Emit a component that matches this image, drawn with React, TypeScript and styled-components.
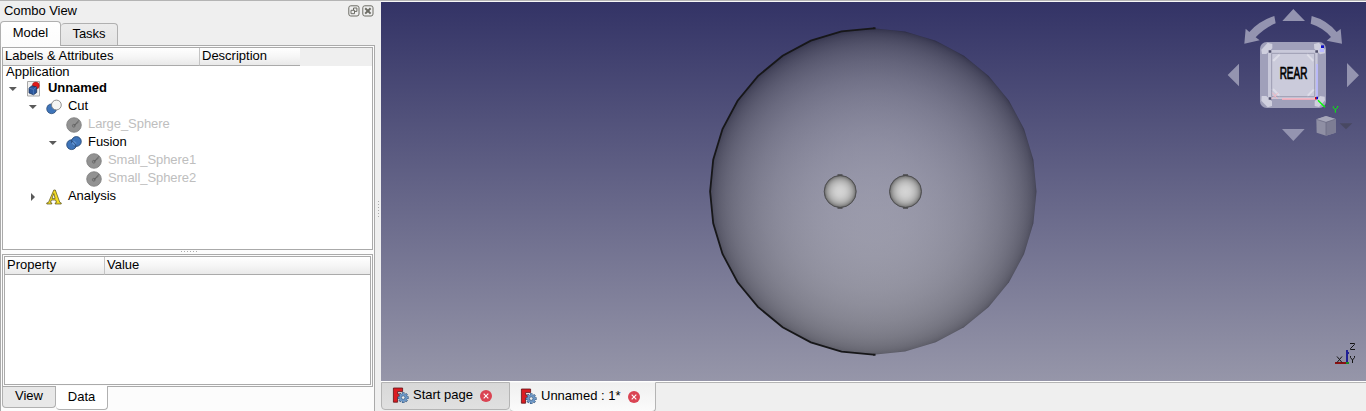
import React from "react";
import styled, { createGlobalStyle } from "styled-components";

const GlobalStyle = createGlobalStyle`
  * { box-sizing: border-box; }
  body {
    margin: 0;
    background: #efefef;
    color: #000;
    font-family: "Liberation Sans", Arial, sans-serif;
    font-size: 13px;
    line-height: 16px;
    overflow: hidden;
  }
  svg { display: block; flex: none; }
`;

const Window = styled.div`
  display: grid;
  grid-template-columns: 375px 6px 985px;
  width: 1366px;
  height: 411px;
  border-top: 1px solid #b4b4b4;
`;

const Dock = styled.aside`
  display: flex;
  flex-direction: column;
  min-width: 0;
`;

const DockTitle = styled.header`
  display: flex;
  align-items: center;
  height: 20px;
  padding: 0 1px 0 4px;
  gap: 2px;
`;

const Title = styled.span`
  flex: 1;
  letter-spacing: -0.05px;
`;

const TabRow = styled.div`
  display: flex;
  align-items: flex-end;
  height: 24px;
`;

const TopTab = styled.button<{ $active?: boolean; $width: number }>`
  width: ${(p) => p.$width}px;
  height: ${(p) => (p.$active ? 25 : 22)}px;
  margin: 0 0 ${(p) => (p.$active ? -1 : 0)}px;
  padding: ${(p) => (p.$active ? "0 0 3px" : "0 0 1px")};
  border: 1px solid #b0b0b0;
  border-left-width: ${(p) => (p.$active ? 1 : 0)}px;
  border-bottom: 0;
  border-radius: 4px 4px 0 0;
  background: ${(p) => (p.$active ? "linear-gradient(#fff, #fcfcfc)" : "linear-gradient(#ececec, #e4e4e4)")};
  font: inherit;
  position: relative;
`;

const Pane = styled.div`
  display: flex;
  flex-direction: column;
  flex: 1;
  min-height: 0;
  padding: 1px;
  border: 1px solid #aaa;
  border-bottom: 0;
  background: #fcfcfc;
`;

const TreeBox = styled.section`
  height: 203px;
  border: 1px solid #aaa;
  background: #fff;
`;

const HeaderRow = styled.div<{ $height: number }>`
  display: flex;
  height: ${(p) => p.$height}px;
  background: #efefef;
`;

const HeaderCell = styled.div<{ $width?: number; $last?: boolean }>`
  ${(p) => (p.$width ? `width: ${p.$width}px;` : "flex: 1;")}
  padding-left: 2px;
  border-right: ${(p) => (p.$last ? "0" : "1px solid #c4c4c4")};
  border-bottom: 1px solid #aaa;
  background: linear-gradient(#fff, #f6f6f6 50%, #e9e9e9);
  line-height: 15px;
`;

const RootLabel = styled.div`
  height: 14px;
  padding-left: 3px;
  line-height: 12px;
`;

const Row = styled.div<{ $depth: number; $muted?: boolean; $bold?: boolean }>`
  display: flex;
  align-items: center;
  height: 18px;
  padding-left: ${(p) => p.$depth * 20 + 5}px;
  color: ${(p) => (p.$muted ? "#bebebe" : "#000")};
  font-weight: ${(p) => (p.$bold ? 700 : 400)};
`;

const Twisty = styled.span`
  width: 10px;
  margin-right: 8px;
`;

const RowIcon = styled.span`
  width: 16px;
  margin-right: 6px;
`;

const RowText = styled.span`
  letter-spacing: -0.06px;
  line-height: 16px;
  margin-top: -2px;
`;

const SplitterDots = styled.div<{ $vertical?: boolean }>`
  display: flex;
  flex-direction: ${(p) => (p.$vertical ? "column" : "row")};
  align-items: center;
  justify-content: center;
  gap: 2px;
  ${(p) => (p.$vertical ? "padding-top: 4px;" : "height: 4px; padding: 0 0 1px 2px;")}
`;

const Dot = styled.i`
  width: 1px;
  height: 1px;
  background: #aaa;
`;

const PropertyFrame = styled.section`
  height: 133px;
  padding: 1px;
  border: 1px solid #aaa;
  background: #fcfcfc;
`;

const PropertyBox = styled.div`
  height: 129px;
  border: 1px solid #aaa;
  background: #fff;
`;

const BottomTabs = styled.div`
  display: flex;
  align-items: flex-start;
  height: 25px;
`;

const BottomTab = styled.button<{ $active?: boolean; $width: number }>`
  position: relative;
  width: ${(p) => p.$width}px;
  height: ${(p) => (p.$active ? 24 : 21)}px;
  margin-top: ${(p) => (p.$active ? -1 : 0)}px;
  padding: ${(p) => (p.$active ? "0 0 1px" : "0 0 3px")};
  border: 1px solid #b0b0b0;
  border-top: 0;
  border-left-width: ${(p) => (p.$active ? 0 : 1)}px;
  border-radius: 0 0 4px 4px;
  background: ${(p) => (p.$active ? "#fff" : "#e8e8e8")};
  font: inherit;
`;

const Main = styled.main`
  display: flex;
  flex-direction: column;
  border-top: 1px solid #f7f7f7;
`;

const DocTabs = styled.nav`
  display: flex;
  flex: 1;
  border-top: 1px solid #fff;
`;

const DocTab = styled.button<{ $active?: boolean; $width: number }>`
  display: flex;
  align-items: center;
  width: ${(p) => p.$width}px;
  height: ${(p) => (p.$active ? 30 : 28)}px;
  padding: ${(p) => (p.$active ? "0 0 1px 10px" : "0 0 1px 10px")};
  border: 1px solid #b4b4b4;
  border-top-color: ${(p) => (p.$active ? "#f4f4f4" : "#b4b4b4")};
  border-left-width: ${(p) => (p.$active ? 0 : 1)}px;
  border-radius: 0 0 4px 4px;
  background: ${(p) => (p.$active ? "linear-gradient(#f0f0f0, #fbfbfb)" : "linear-gradient(#d8d8d8, #e0e0e0)")};
  font: inherit;
`;

const DocLabel = styled.span<{ $width: number }>`
  width: ${(p) => p.$width}px;
  margin: -2px 0 0 4px;
  text-align: left;
  white-space: nowrap;
`;

const TabFiller = styled.div`
  flex: 1;
  border-top: 1px solid #b4b4b4;
`;

function DockButton({ close }: { close?: boolean }) {
  return (
    <svg width="12" height="12" viewBox="0 0 12 12" fill="none" stroke="#6c6c64">
      <rect x=".8" y=".8" width="10.2" height="10.2" rx="2" />
      {close ? (
        <path d="M3.2 3.2 8.6 8.6M8.6 3.2 3.2 8.6" strokeWidth="2" />
      ) : (
        <path d="M5.5 5V3h3.4v3.4H7M3 5.3h3.5v3.4H3z" />
      )}
    </svg>
  );
}

function Arrow({ closed }: { closed?: boolean }) {
  return (
    <svg width="10" height="10" viewBox="0 0 10 10" fill="#5a5a5a">
      <path d={closed ? "M3 1V9L7 5z" : "M.8 3h8L4.8 7z"} />
    </svg>
  );
}

type IconKind = "document" | "cut" | "sphere" | "fusion" | "analysis";

function TreeIcon({ kind }: { kind: IconKind }) {
  return (
    <svg width="16" height="16" viewBox="0 0 16 16">
      {kind === "document" && (
        <>
          <path d="M1.5.5h12v14.5h-12z" fill="#f0f0f0" stroke="#a8a8a8" />
          <circle cx="9.8" cy="4.6" r="3.5" fill="#e01919" stroke="#901010" strokeWidth=".4" />
          <path d="M3 7 6 4.8l4.7 1.2v5.5L7.5 13.8 3 12z" fill="#2b569b" stroke="#14294d" strokeWidth=".7" />
          <path d="M3 7l4.4 1.4 3.2-2.4M7.4 8.4v5.4" fill="none" stroke="#5684c4" strokeWidth=".7" />
        </>
      )}
      {kind === "cut" && (
        <>
          <circle cx="5.6" cy="9.8" r="4.9" fill="#3e74b9" stroke="#26456f" strokeWidth=".7" />
          <circle cx="10.4" cy="6" r="4.9" fill="#f5f5f3" stroke="#777" strokeWidth=".8" />
        </>
      )}
      {kind === "sphere" && (
        <>
          <circle cx="8" cy="8" r="7.3" fill="#929292" stroke="#7d7d7d" strokeWidth=".8" />
          <path d="M8 8.7 13 3.2M8 8.7l4.6-3.7" stroke="#606060" strokeWidth=".8" />
          <circle cx="7.8" cy="8.7" r="1.4" fill="none" stroke="#606060" strokeWidth=".8" />
        </>
      )}
      {kind === "fusion" && (
        <>
          <circle cx="5.6" cy="9.7" r="4.9" fill="#3e74b9" stroke="#26456f" strokeWidth=".8" />
          <circle cx="10.4" cy="6.5" r="4.9" fill="#3e74b9" stroke="#26456f" strokeWidth=".8" />
          <path d="M6.6 7 9.4 9.4" stroke="#5c90d2" strokeWidth="4" />
          <path d="M5.8 6Q9 7.6 10.2 11" fill="none" stroke="#26456f" strokeWidth=".7" />
        </>
      )}
      {kind === "analysis" && (
        <path
          d="M.8 15h5v-1.1l-1.3-.5.9-2.4h4.2l.9 2.4-1.3.5V15h6v-1.1l-1.4-.5L9.3 1H7.8L2.5 13.4l-1.7.5zM6 9.4 7.8 4.5 9.1 9.4z"
          fill="#f5dd25"
          stroke="#514b16"
          strokeWidth=".7"
        />
      )}
    </svg>
  );
}

function FreeCadIcon() {
  return (
    <svg width="17" height="17" viewBox="0 0 17 17">
      <path d="M1.4 1h9.2v3.6H5.6v2.3h3.3v3.3H5.6v5H1.4z" fill="#db1c22" stroke="#5c1317" strokeWidth=".8" />
      <g transform="translate(11.2 10.6)">
        <path d="M0-5.4V5.4M-5.4 0H5.4M-3.8-3.8 3.8 3.8M3.8-3.8-3.8 3.8" stroke="#34577f" strokeWidth="2.6" />
        <circle r="3.7" fill="#6f9ac9" />
        <path d="M0-4.9V4.9M-4.9 0H4.9M-3.4-3.4 3.4 3.4M3.4-3.4-3.4 3.4" stroke="#6f9ac9" strokeWidth="1.6" />
        <circle r="1.8" fill="#ececec" stroke="#34577f" strokeWidth=".7" />
      </g>
    </svg>
  );
}

function CloseBadge() {
  return (
    <svg width="12" height="12" viewBox="0 0 12 12">
      <circle cx="6" cy="6" r="6" fill="#da4453" />
      <path d="M3.7 3.7 8.3 8.3M8.3 3.7 3.7 8.3" stroke="#fff" strokeWidth="1.1" />
    </svg>
  );
}

const CX = 873.3;
const CY = 191.5;
const RADIUS = 163.2;

// Tessellated sphere silhouette: `count` steps of 11.25 degrees.
const rim = (start: number, count: number) =>
  Array.from({ length: count + 1 }, (_, i) => {
    const a = ((start + i * 11.25) * Math.PI) / 180;
    return `${(CX + RADIUS * Math.cos(a)).toFixed(1)},${(CY + RADIUS * Math.sin(a)).toFixed(1)}`;
  }).join(" ");

// Head-lit shading falls off with the cosine of the surface normal.
const OFFSETS = [0, 0.15, 0.3, 0.4, 0.5, 0.6, 0.7, 0.8, 0.86, 0.9, 0.94, 0.97, 0.99, 1];
const shade = (lit: number, dark: number) =>
  OFFSETS.map((r) => {
    const v = Math.round(dark + (lit - dark) * Math.sqrt(1 - r * r));
    return <stop key={r} offset={r} stopColor={`rgb(${v},${v},${v})`} />;
  });

function NavigationCube() {
  return (
    <g transform="translate(1220 0) scale(.33333)">
      <g fill="#9494b0">
        <path d="M187 63h68L220 27zM186 387h68L220 423zM57 191v68L23 225zM381 189v73L417 226z" />
        <path d="M163 48Q118 62 88 96L77 86 73 131 119 121 107 112Q133 84 167 70z" />
        <path d="M275 48Q320 60 350 96L362 87 366 131 320 122 333 111Q310 83 272 71z" />
      </g>
      <rect x="120" y="126" width="198" height="198" rx="20" fill="#a0a0ba" />
      <g fill="#cfcfde">
        <path d="M124 149 143 128 157 132V145L139 162 126 162z" />
        <path d="M282 132 297 128 315 149V160L300 163 283 146z" />
        <path d="M125 288H139L156 304V318L143 322 124 302z" />
        <path d="M300 288 314 290 315 301 297 321 284 318V304z" />
      </g>
      <rect x="144" y="150" width="149" height="147" fill="#c9c9da" />
      <path d="M178 160H262L284 183V268L262 290H178L155 268V183z" fill="#cbcbdb" />
      <path d="M155 183V160H178M262 160H284V183M284 268V290H262M178 290H155V268M178 160H262M284 183V268M262 290H178M155 268V183" fill="none" stroke="#9d9db2" strokeWidth="3" />
      <path d="M157 180 176 163 181 166 162 185zM260 166 264 162 282 180 278 185zM261 285 279 267 283 271 266 289zM157 270 161 265 180 284 175 288z" fill="#dddde8" />
      <path d="M146 151h8v7h-8zM286 151h8v7h-8zM146 292h8v7h-8z" fill="#50506c" />
      <path d="M291 192v98" stroke="#b9b9ff" strokeWidth="5" />
      <path d="M186 297h101" stroke="#ffb5c1" strokeWidth="5" />
      <path d="M157 278 173 297M174 278 155 297" stroke="#f3b9c3" strokeWidth="3" />
      <path d="M303 136h9v8h-9z" fill="#1010c7" />
      <path d="M299 146h13v10h-13z" fill="#b9b9ff" />
      <path d="M285 291h5v7h-5z" fill="#e00000" />
      <path d="M289 290h5v8h-5z" fill="#0000c7" />
      <path d="M294 301 315 322" stroke="#0f0" strokeWidth="4" />
      <path d="M340 319V323L346 329 353 322V318M346 329V338" fill="none" stroke="#0f0" strokeWidth="3" />
      <text x="179" y="237" fontSize="50" textLength="83" lengthAdjust="spacingAndGlyphs" fill="#000" stroke="#000" strokeWidth="2.2">REAR</text>
      <path d="M289 358 318 348 347 357V398L318 407 290 398z" fill="#8f8fa4" />
      <path d="M289 358 318 348 347 357 318 367z" fill="#a6a6b9" />
      <path d="M318 367 347 357V398L318 407z" fill="#7d7d94" />
      <path d="M289 358 318 367 347 357M318 367V407" fill="none" stroke="#666681" strokeWidth="2" />
      <path d="M359 370H397L378 388z" fill="#484862" />
    </g>
  );
}

function AxisCross() {
  return (
    <g fill="none">
      <g shapeRendering="crispEdges">
        <path d="M1335 363h12" stroke="#8b1111" strokeWidth="2" />
        <path d="M1347 350v13" stroke="#202095" strokeWidth="2" />
        <path d="M1348 353h1" stroke="#202095" strokeWidth="2" />
        <path d="M1346 363h3" stroke="#198b22" strokeWidth="2" />
      </g>
      <g stroke="#151515" strokeWidth="1">
        <path d="M1350 343.5h4.5v1l-4 4v1h4.5" />
        <path d="M1337 356.5l5 6M1342 356.5l-5 6" />
        <path d="M1350.5 356v1.5l2 2.5 2-2.5V356M1352.5 360v3" />
      </g>
    </g>
  );
}

function Viewport() {
  return (
    <svg width="985" height="379" viewBox="381 2 985 379">
      <defs>
        <linearGradient id="sky" x1="0" y1="0" x2="0" y2="1">
          <stop offset="0" stopColor="#333366" />
          <stop offset="1" stopColor="#9696a9" />
        </linearGradient>
        <radialGradient id="large">{shade(204, 28)}</radialGradient>
        <radialGradient id="small">{shade(212, 72)}</radialGradient>
      </defs>
      <rect x="381" y="2" width="985" height="379" fill="url(#sky)" />
      <polygon points={rim(0, 32)} fill="url(#large)" opacity=".5" />
      <polyline points={rim(90, 16)} fill="none" stroke="#171719" strokeWidth="1.8" />
      <path d="M873 28.2h2.5M873 354.8h2.5" stroke="#171719" strokeWidth="2" />
      {[840.2, 905.5].map((x) => (
        <circle key={x} cx={x} cy={CY} r="16" fill="url(#small)" stroke="#505052" />
      ))}
      <path d="M837.5 175h5M837.5 208h5M903 175h5M903 208h5" stroke="#48484a" strokeWidth="1.5" />
      <NavigationCube />
      <AxisCross />
    </svg>
  );
}

const TREE: { depth: number; kind: IconKind; label: string; arrow?: "open" | "closed"; muted?: boolean; bold?: boolean }[] = [
  { depth: 0, kind: "document", label: "Unnamed", arrow: "open", bold: true },
  { depth: 1, kind: "cut", label: "Cut", arrow: "open" },
  { depth: 2, kind: "sphere", label: "Large_Sphere", muted: true },
  { depth: 2, kind: "fusion", label: "Fusion", arrow: "open" },
  { depth: 3, kind: "sphere", label: "Small_Sphere1", muted: true },
  { depth: 3, kind: "sphere", label: "Small_Sphere2", muted: true },
  { depth: 1, kind: "analysis", label: "Analysis", arrow: "closed" },
];

const dots = Array.from({ length: 6 }, (_, i) => <Dot key={i} />);

export default function App() {
  return (
    <>
      <GlobalStyle />
      <Window>
        <Dock>
          <DockTitle>
            <Title>Combo View</Title>
            <DockButton />
            <DockButton close />
          </DockTitle>
          <TabRow>
            <TopTab $active $width={61}>Model</TopTab>
            <TopTab $width={57}>Tasks</TopTab>
          </TabRow>
          <Pane>
            <TreeBox>
              <HeaderRow $height={18}>
                <HeaderCell $width={197}>Labels &amp; Attributes</HeaderCell>
                <HeaderCell $width={100} $last>Description</HeaderCell>
              </HeaderRow>
              <RootLabel>Application</RootLabel>
              {TREE.map((node) => (
                <Row key={node.label} $depth={node.depth} $muted={node.muted} $bold={node.bold}>
                  <Twisty>{node.arrow && <Arrow closed={node.arrow === "closed"} />}</Twisty>
                  <RowIcon><TreeIcon kind={node.kind} /></RowIcon>
                  <RowText>{node.label}</RowText>
                </Row>
              ))}
            </TreeBox>
            <SplitterDots>{dots}</SplitterDots>
            <PropertyFrame>
              <PropertyBox>
                <HeaderRow $height={18}>
                  <HeaderCell $width={100}>Property</HeaderCell>
                  <HeaderCell $last>Value</HeaderCell>
                </HeaderRow>
              </PropertyBox>
            </PropertyFrame>
            <BottomTabs>
              <BottomTab $width={54}>View</BottomTab>
              <BottomTab $active $width={52}>Data</BottomTab>
            </BottomTabs>
          </Pane>
        </Dock>
        <SplitterDots $vertical>{dots}</SplitterDots>
        <Main>
          <Viewport />
          <DocTabs>
            <DocTab $width={129}>
              <FreeCadIcon />
              <DocLabel $width={67}>Start page</DocLabel>
              <CloseBadge />
            </DocTab>
            <DocTab $active $width={146}>
              <FreeCadIcon />
              <DocLabel $width={87}>Unnamed : 1*</DocLabel>
              <CloseBadge />
            </DocTab>
            <TabFiller />
          </DocTabs>
        </Main>
      </Window>
    </>
  );
}
